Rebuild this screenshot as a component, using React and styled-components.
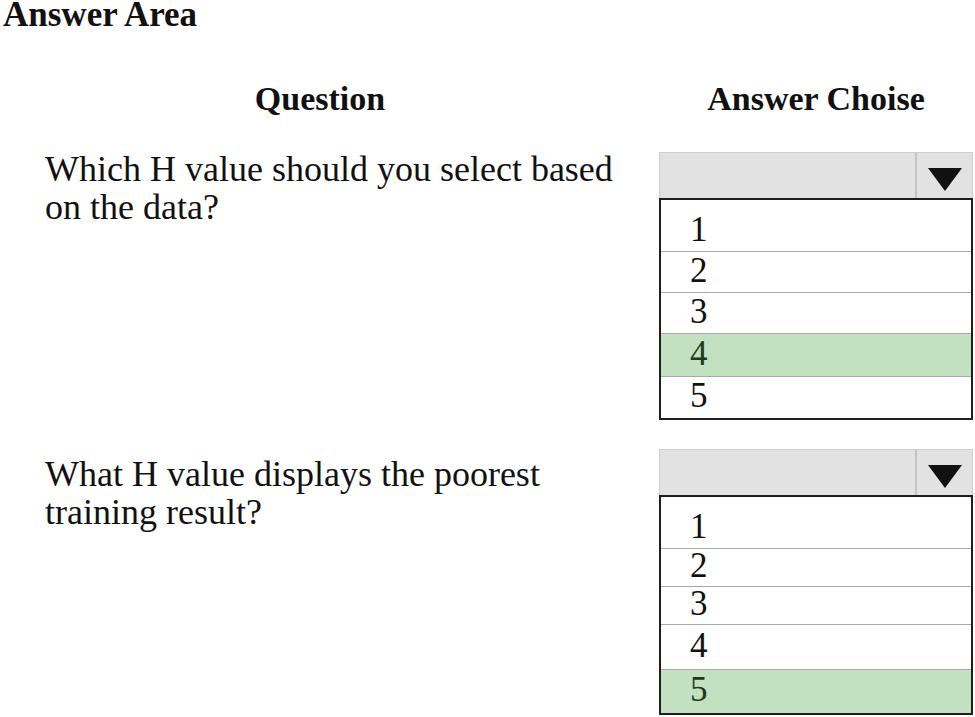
import React from "react";
import styled, { createGlobalStyle } from "styled-components";

const Global = createGlobalStyle`
  html, body { margin: 0; padding: 0; background: #fff; }
  body { font-family: "Liberation Serif", "Times New Roman", serif; color: #111; }
`;

const Page = styled.div`
  width: 975px;
  height: 717px;
  overflow: hidden;
`;

const Title = styled.h1`
  margin: 0;
  padding: 0 0 0 3px;
  font-size: 35px;
  line-height: 29px;
  font-weight: bold;
`;

const Row = styled.div`
  display: grid;
  grid-template-columns: 614px 314px;
  padding-left: 45px;
  margin-top: ${(p) => p.$top}px;
  align-items: start;
`;

const Head = styled.div`
  font-size: 34px;
  font-weight: bold;
  line-height: 36px;
  text-align: center;
  padding-right: ${(p) => p.$shift || 0}px;
`;

const Prompt = styled.p`
  margin: 0;
  padding-top: ${(p) => p.$offset || 0}px;
  font-size: 36px;
  line-height: 38px;
`;

const Select = styled.div`
  display: flex;
  flex-direction: column;
  margin-top: ${(p) => p.$offset || 0}px;
`;

const Bar = styled.div`
  display: flex;
  height: 46px;
  background: #e2e2e2;
  border: 1px solid #cdcdcd;
  border-bottom: none;
  box-sizing: border-box;
`;

const BarField = styled.div`
  flex: 1;
`;

const ArrowCell = styled.div`
  width: 55px;
  border-left: 2px solid #c4c4c4;
  display: flex;
  align-items: center;
  justify-content: center;
  padding-top: 6px;
`;

const List = styled.div`
  border: 2px solid #1e1e1e;
  display: flex;
  flex-direction: column;
  padding-top: 12px;
`;

const Option = styled.div`
  height: ${(p) => p.$h}px;
  box-sizing: border-box;
  padding-left: 29px;
  font-size: 35px;
  line-height: ${(p) => p.$h - 4}px;
  background: ${(p) => (p.$on ? "#c1e1c1" : "#fff")};
  border-top: ${(p) => (p.$first ? "none" : "1.5px solid #a9a9a9")};
  color: ${(p) => (p.$on ? "#1d3a1d" : "#111")};
`;

function Arrow() {
  return (
    <svg width="34" height="24" viewBox="0 0 34 24">
      <polygon points="0,1 34,1 17,24" fill="#111" />
    </svg>
  );
}

function Dropdown({ pick, heights, offset }) {
  return (
    <Select $offset={offset}>
      <Bar>
        <BarField />
        <ArrowCell>
          <Arrow />
        </ArrowCell>
      </Bar>
      <List>
        {[1, 2, 3, 4, 5].map((n, i) => (
          <Option key={n} $h={heights[i]} $on={n === pick} $first={i === 0}>
            {n}
          </Option>
        ))}
      </List>
    </Select>
  );
}

export default function App() {
  return (
    <Page>
      <Global />
      <Title>Answer Area</Title>
      <Row $top={52}>
        <Head $shift={64}>Question</Head>
        <Head>Answer Choise</Head>
      </Row>
      <Row $top={33}>
        <Prompt>
          Which H value should you select based
          <br />
          on the data?
        </Prompt>
        <Dropdown pick={4} offset={2} heights={[39, 41, 41, 43, 42]} />
      </Row>
      <Row $top={29}>
        <Prompt $offset={6}>
          What H value displays the poorest
          <br />
          training result?
        </Prompt>
        <Dropdown pick={5} heights={[39, 38, 38, 45, 44]} />
      </Row>
    </Page>
  );
}
